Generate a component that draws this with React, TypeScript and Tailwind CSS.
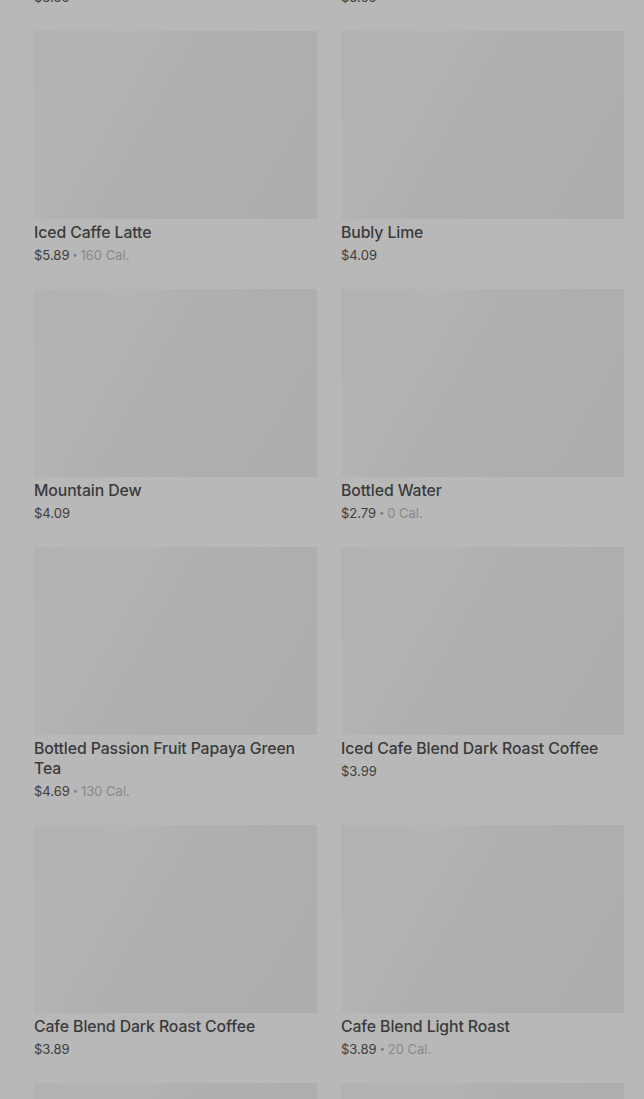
import React from "react";

type Item = { name: string; price: string; cal?: string };

const items: Item[] = [
  { name: "Iced Coffee", price: "$3.35" },
  { name: "Sparkling Water", price: "$3.65" },
  { name: "Iced Caffe Latte", price: "$5.89", cal: "160 Cal." },
  { name: "Bubly Lime", price: "$4.09" },
  { name: "Mountain Dew", price: "$4.09" },
  { name: "Bottled Water", price: "$2.79", cal: "0 Cal." },
  { name: "Bottled Passion Fruit Papaya Green Tea", price: "$4.69", cal: "130 Cal." },
  { name: "Iced Cafe Blend Dark Roast Coffee", price: "$3.99" },
  { name: "Cafe Blend Dark Roast Coffee", price: "$3.89" },
  { name: "Cafe Blend Light Roast", price: "$3.89", cal: "20 Cal." },
  { name: "Pike Place Roast", price: "$3.49" },
  { name: "Hot Chocolate", price: "$4.29" },
];

function Card({ item }: { item: Item }) {
  return (
    <div className="flex flex-col">
      <div className="h-[188px] w-full bg-[linear-gradient(120deg,#b2b2b2_0%,#b4b4b4_25%,#afafaf_45%,#adadad_100%)]" />
      <div className="mt-[4px] text-[15.8px] leading-[20px] font-medium tracking-[-0.1px] text-[#3a3a3a]">
        {item.name}
      </div>
      <div className="mt-[2px] flex h-[20px] items-center text-[13px] leading-[20px] text-[#3d3d3d]">
        <span>{item.price}</span>
        {item.cal && (
          <>
            <span className="mx-[3px] text-[9px] leading-[20px] text-[#7d7d7d]">•</span>
            <span className="text-[#888888]">{item.cal}</span>
          </>
        )}
      </div>
    </div>
  );
}

export default function App() {
  return (
    <div
      className="w-[644px] h-[1099px] overflow-hidden bg-[#b8b8b8]"
      style={{ fontFamily: "Inter, 'Noto Sans', sans-serif" }}
    >
      <div className="mt-[-227px] pl-[34px] grid grid-cols-[283px_283px] gap-x-[24px] gap-y-[24px]">
        {items.map((it, i) => (
          <Card key={i} item={it} />
        ))}
      </div>
    </div>
  );
}
